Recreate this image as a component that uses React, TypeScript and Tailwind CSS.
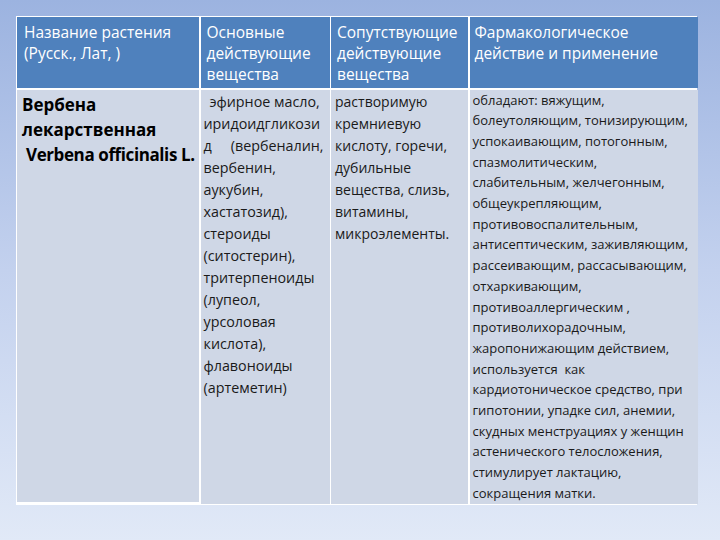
const col2 = [
  "эфирное масло,",
  "иридоидгликози",
  "д (вербеналин,",
  "вербенин,",
  "аукубин,",
  "хастатозид),",
  "стероиды",
  "(ситостерин),",
  "тритерпеноиды",
  "(лупеол,",
  "урсоловая",
  "кислота),",
  "флавоноиды",
  "(артеметин)",
];

const col3 = [
  "растворимую",
  "кремниевую",
  "кислоту, горечи,",
  "дубильные",
  "вещества, слизь,",
  "витамины,",
  "микроэлементы.",
];

const col4 = [
  "обладают: вяжущим,",
  "болеутоляющим, тонизирующим,",
  "успокаивающим, потогонным,",
  "спазмолитическим,",
  "слабительным, желчегонным,",
  "общеукрепляющим,",
  "противовоспалительным,",
  "антисептическим, заживляющим,",
  "рассеивающим, рассасывающим,",
  "отхаркивающим,",
  "противоаллергическим ,",
  "противолихорадочным,",
  "жаропонижающим действием,",
  "используется  как",
  "кардиотоническое средство, при",
  "гипотонии, упадке сил, анемии,",
  "скудных менструациях у женщин",
  "астенического телосложения,",
  "стимулирует лактацию,",
  "сокращения матки.",
];

export default function App() {
  return (
    <div
      className="w-[720px] h-[540px] bg-gradient-to-b from-[#9cb3e0] via-[#c3d1ee] to-[#e1e9f7] pt-[16px] pl-[16px]"
      style={{ fontFamily: '"Open Sans", "Noto Sans", sans-serif' }}
    >
      <div className="grid grid-cols-[182px_129px_137px_228px] w-[681px] border border-white bg-white gap-[1.5px]">
        {/* header */}
        <div className="bg-[#4f81bd] h-[71px] pl-[7px] pt-[5px] text-white font-medium text-[15.5px] leading-[21px]">
          <div>Название растения</div>
          <div>(Русск., Лат, )</div>
        </div>
        <div className="bg-[#4f81bd] pl-[6px] pt-[5px] text-white font-medium text-[15.5px] leading-[21px]">
          <div>Основные</div>
          <div>действующие</div>
          <div>вещества</div>
        </div>
        <div className="bg-[#4f81bd] pl-[6px] pt-[5px] text-white font-medium text-[15.5px] leading-[21px]">
          <div>Сопутствующие</div>
          <div>действующие</div>
          <div>вещества</div>
        </div>
        <div className="bg-[#4f81bd] pl-[5px] pt-[5px] text-white font-medium text-[15.5px] leading-[21px]">
          <div>Фармакологическое</div>
          <div>действие и применение</div>
        </div>

        {/* body */}
        <div className="bg-[#cfd7e6] h-[412px] pl-[5px] pt-[2px] text-black font-bold text-[17px] leading-[25px]">
          <div>Вербена</div>
          <div>лекарственная</div>
          <div className="pl-[4px] tracking-[-0.4px]">Verbena officinalis L.</div>
        </div>
        <div className="bg-[#cfd7e6] pl-[3px] pr-[2px] pt-[1px] text-[#1a1a1a] text-[14.3px] leading-[22px]">
          {col2.map((line, i) => (
            <div key={i} className={i === 0 ? "pl-[6px]" : i === 2 ? "flex justify-between pr-[4px]" : ""}>
              {i === 2 ? (
                <>
                  <span>д</span>
                  <span>(вербеналин,</span>
                </>
              ) : (
                line
              )}
            </div>
          ))}
        </div>
        <div className="bg-[#cfd7e6] pl-[4px] pt-[1px] text-[#1a1a1a] text-[14px] leading-[22px]">
          {col3.map((line, i) => (
            <div key={i}>{line}</div>
          ))}
        </div>
        <div className="bg-[#cfd7e6] pl-[3px] pt-[0px] text-[#1a1a1a] text-[13px] leading-[20.7px]">
          {col4.map((line, i) => (
            <div key={i} className="whitespace-pre">{line}</div>
          ))}
        </div>
      </div>
    </div>
  );
}
